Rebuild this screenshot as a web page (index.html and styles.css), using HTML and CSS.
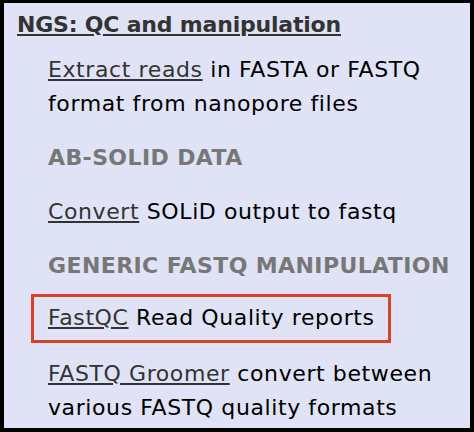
FILE: index.html
```html
<!DOCTYPE html>
<html lang="en">
<head>
<meta charset="utf-8">
<title>NGS: QC and manipulation</title>
<link rel="stylesheet" href="styles.css">
</head>
<body>
<div class="panel">
  <a class="section-title" href="#">NGS: QC and manipulation</a>
  <div class="tools">
    <div class="tool"><a href="#">Extract reads</a> in FASTA or FASTQ format from nanopore files</div>
    <div class="label">AB-SOLID DATA</div>
    <div class="tool"><a href="#">Convert</a> SOLiD output to fastq</div>
    <div class="label">GENERIC FASTQ MANIPULATION</div>
    <div class="tool highlight"><a href="#">FastQC</a> Read Quality reports</div>
    <div class="tool"><a href="#">FASTQ Groomer</a> convert between various FASTQ quality formats</div>
  </div>
</div>
</body>
</html>
```
FILE: styles.css
```css
html, body {
  margin: 0;
  padding: 0;
  background: #000;
}

.panel {
  box-sizing: border-box;
  width: 474px;
  height: 432px;
  border-style: solid;
  border-color: #000;
  border-width: 3px 4px 4px 4px;
  background: #dfe3f5;
  padding: 5px 12px 0 13px;
  font-family: "DejaVu Sans", sans-serif;
  font-size: 22px;
  line-height: 34px;
  letter-spacing: 0.6px;
  color: #000;
  overflow: hidden;
}

.section-title {
  display: block;
  font-weight: bold;
  letter-spacing: -0.2px;
  color: #333;
  text-decoration: underline;
}

.tools {
  display: flex;
  flex-direction: column;
  gap: 20px;
  margin-top: 11px;
  padding-left: 31px;
}

.tool a {
  color: #333;
  text-decoration: underline;
}

.label {
  font-weight: bold;
  letter-spacing: 0.4px;
  color: #777;
}

.highlight {
  align-self: flex-start;
  margin: -9px 0 -6px -17px;
  padding: 4px 13px 5px 14px;
  border: 3px solid #d9412b;
}
```
